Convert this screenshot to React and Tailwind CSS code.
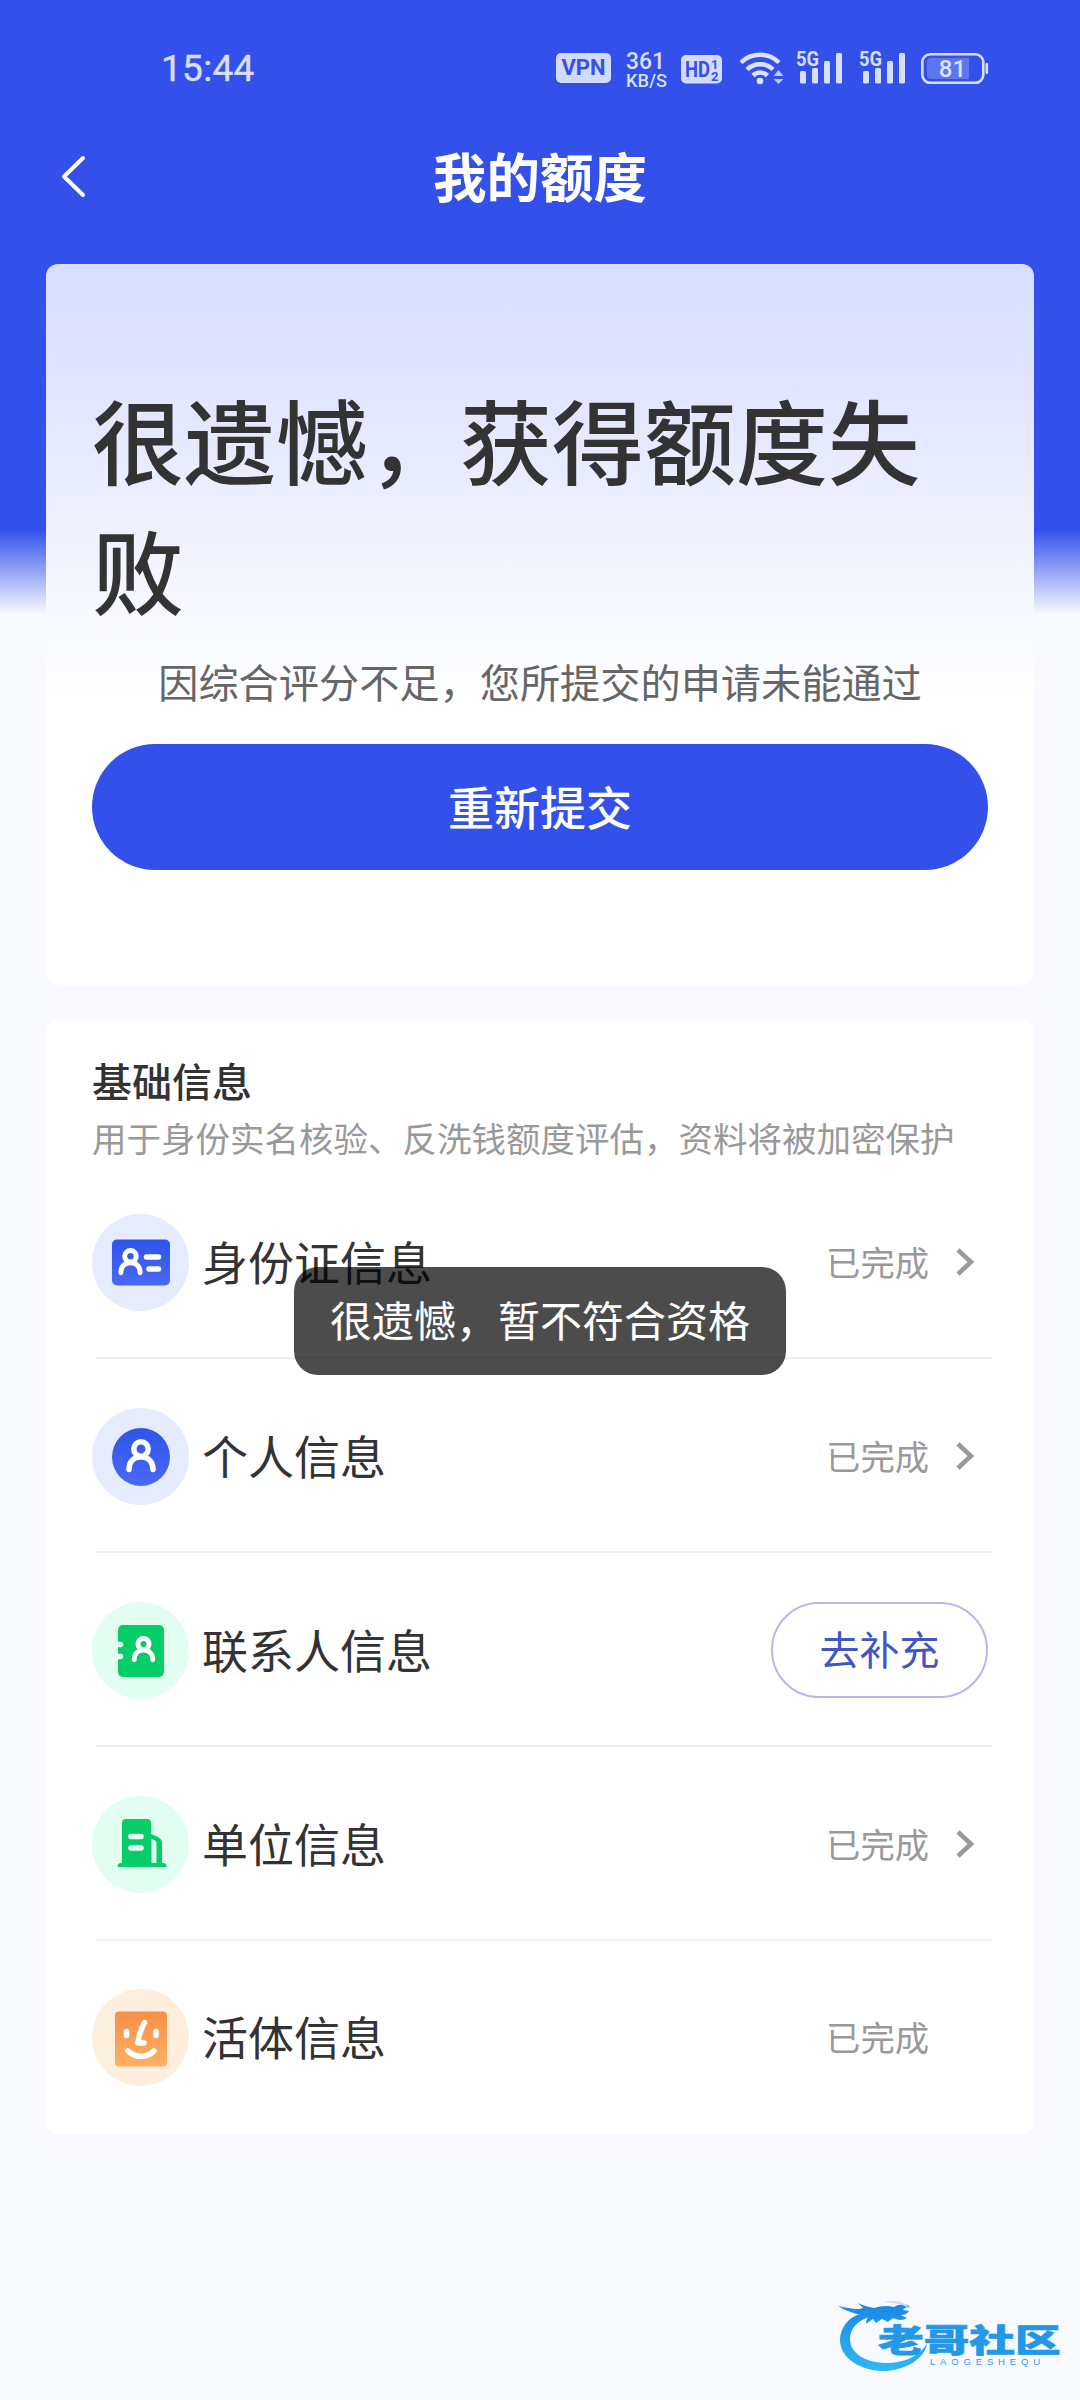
import React from "react";

function StatusBar() {
  return (
    <div className="flex h-[136px] items-start pl-[161px] pr-[91px] font-['Roboto',sans-serif] text-[#d7dffc]">
      <div className="mt-[47px] text-[37px] leading-[44px] tracking-[0.3px] [-webkit-text-stroke:0.4px_#d7dffc]">15:44</div>
      <div className="ml-auto mt-[50px] flex h-[38px] items-start">
        <div className="mt-[3px] flex h-[30px] w-[55px] items-center justify-center rounded-[5px] bg-[#d2dbfb] text-[22px] font-bold leading-none text-[#3351ea]">
          VPN
        </div>
        <svg className="ml-[14px]" width="42" height="38" viewBox="0 0 42 38" fill="#d7dffc" fontFamily="Roboto, sans-serif" fontWeight="500">
          <text x="1" y="19" fontSize="24" textLength="39" lengthAdjust="spacingAndGlyphs">361</text>
          <text x="1" y="36.500" fontSize="19" textLength="41" lengthAdjust="spacingAndGlyphs">KB/S</text>
        </svg>
        <svg className="ml-[14px] mt-[5px]" width="41" height="29" viewBox="0 0 41 29">
          <rect width="41" height="28.500" rx="5" fill="#d2dbfb" />
          <g fill="#3351ea" fontFamily="Roboto, sans-serif" fontWeight="700">
            <text x="4" y="22" fontSize="22" textLength="25" lengthAdjust="spacingAndGlyphs">HD</text>
            <text x="30" y="13.500" fontSize="13">1</text>
            <text x="30" y="25.500" fontSize="13">2</text>
          </g>
        </svg>
        <svg className="ml-[17px]" width="46" height="36" viewBox="0 0 46 36" fill="none">
          <g stroke="#dbe3fd" strokeWidth="4.500">
            <path d="M2 12.500a27 27 0 0 1 38 0" />
            <path d="M8 19.500a18.500 18.500 0 0 1 26 0" />
            <path d="M14 25.500a10.500 10.500 0 0 1 14.500 0" />
          </g>
          <circle cx="21" cy="31" r="3.300" fill="#dbe3fd" />
          <path d="M39.500 20l5 6h-10zM39.500 34l5-5h-10z" fill="#b9c7fa" />
        </svg>
        {[0, 1].map((n) => (
          <svg key={n} className={n ? "ml-[15px] overflow-visible" : "ml-[11px] overflow-visible"} width="48" height="36" viewBox="0 0 48 36" fill="#d7dffc">
            <text x="0" y="16" fontSize="20" fontFamily="Roboto, sans-serif" fontWeight="700" textLength="23" lengthAdjust="spacingAndGlyphs">5G</text>
            <rect x="4" y="21" width="6" height="12.500" rx="1.500" />
            <rect x="16" y="18" width="6" height="15.500" rx="1.500" />
            <rect x="28" y="11" width="6" height="22.500" rx="1.500" />
            <rect x="40" y="3" width="6" height="30.500" rx="1.500" />
          </svg>
        ))}
        <svg className="ml-[14px]" width="68" height="36" viewBox="0 0 68 36">
          <rect x="1.300" y="4.300" width="61" height="28.500" rx="8" fill="none" stroke="#d7dffc" strokeWidth="2.600" />
          <path d="M10 8h38v21H10q-4 0-4-4V12q0-4 4-4z" fill="#5b76ef" />
          <rect x="64.500" y="13" width="2.600" height="11" rx="1.200" fill="#d7dffc" />
          <text x="31.500" y="27" textAnchor="middle" fontSize="24" fontFamily="Roboto, sans-serif" fontWeight="500" fill="#dbe3fd">81</text>
        </svg>
      </div>
    </div>
  );
}

function Person({ x, y, s = 1, w = 5.5 }) {
  return (
    <g transform={`translate(${x} ${y}) scale(${s})`} fill="none" stroke="#fff" strokeWidth={w} strokeLinecap="round">
      <circle cx="0" cy="-6.500" r="7.200" />
      <path d="M-12 14c0-8 5-12.500 12-12.500s12 4.500 12 12.500" />
    </g>
  );
}

const icons = {
  id: (
    <>
      <circle cx="48.500" cy="48.500" r="48.500" fill="#e7ebfe" />
      <rect x="20" y="25.500" width="58" height="46" rx="5" fill="url(#blue)" />
      <Person x={38.500} y={47.500} s={0.8} w={6.200} />
      <path d="M54.500 43h12M57 55h9.500" stroke="#fff" strokeWidth="5.500" strokeLinecap="round" />
    </>
  ),
  person: (
    <>
      <circle cx="48.500" cy="48.500" r="48.500" fill="#e7ebfe" />
      <circle cx="49" cy="49" r="29" fill="url(#blue)" />
      <Person x={49} y={47.500} />
    </>
  ),
  contact: (
    <>
      <circle cx="48.500" cy="48.500" r="48.500" fill="#e1fef0" />
      <rect x="26" y="23" width="46" height="52" rx="5" fill="#07cd68" />
      <path d="M23 42.500h5.500M23 54.500h5.500" stroke="#e8fff4" strokeWidth="5.500" strokeLinecap="round" />
      <Person x={51.500} y={47} s={0.77} w={6.400} />
    </>
  ),
  office: (
    <>
      <circle cx="48.500" cy="48.500" r="48.500" fill="#e1fef0" />
      <path d="M30 67V27q0-4 4-4h21q4 0 4 4v11l7 3q4 2 4 6v20h1.500q3 0 3 4H25.500q0-4 3-4zM59.500 43v24h5V47q0-2-2-2.700z" fill="#07cd68" fillRule="evenodd" />
      <path d="M39 40.500h10M39 52h10" stroke="#e8fff4" strokeWidth="5.500" strokeLinecap="round" />
    </>
  ),
  face: (
    <>
      <circle cx="48.500" cy="48.500" r="48.500" fill="#feeedd" />
      <rect x="23" y="22.500" width="52" height="55" rx="4" fill="url(#orange)" />
      <g fill="none" stroke="#fff" strokeLinecap="round" strokeLinejoin="round" strokeWidth="5.500">
        <path d="M34.500 42.500v4M64 42.500v4" />
        <path d="M52.500 33.500q-6 12-6.500 20.500h6" />
        <path d="M36 62c7 7 19 7 26 0" />
      </g>
    </>
  ),
};

const rows = [
  { icon: "id", label: "身份证信息", arrow: true },
  { icon: "person", label: "个人信息", arrow: true },
  { icon: "contact", label: "联系人信息", action: "去补充" },
  { icon: "office", label: "单位信息", arrow: true },
  { icon: "face", label: "活体信息" },
];

function Row({ icon, label, arrow, action, last }) {
  return (
    <div className={last ? "flex h-[193px] items-center" : "flex h-[194px] items-center bg-[linear-gradient(#f0f0f2,#f0f0f2)] bg-[length:896px_2px] bg-[position:4px_192px] bg-no-repeat"}>
      <svg width="97" height="97" viewBox="0 0 97 97" className="shrink-0">{icons[icon]}</svg>
      <span className="ml-[13px] pb-[5px] text-[46px] leading-[60px] text-[#333]">{label}</span>
      {action ? (
        <button className="ml-auto mr-[4px] flex h-[96px] w-[217px] items-center justify-center rounded-full border-2 border-[#b9b7e6] pb-[4px] text-[40px] text-[#3f56c4]">
          {action}
        </button>
      ) : (
        <div className="ml-auto flex items-center pr-[17px]">
          <span className="pb-[3px] text-[34.300px] leading-[44px] text-[#999]">已完成</span>
          <svg width="20" height="32" viewBox="0 0 20 32" className={arrow ? "ml-[26px]" : "invisible ml-[26px]"}>
            <path d="M3 4l13 12L3 28" fill="none" stroke="#999" strokeWidth="4.500" />
          </svg>
        </div>
      )}
    </div>
  );
}

function Watermark() {
  return (
    <svg className="absolute left-[834px] top-[2294px]" width="234" height="80" viewBox="0 0 234 80">
      <defs>
        <linearGradient id="wm" x1="0" y1="8" x2="0" y2="78" gradientUnits="userSpaceOnUse">
          <stop offset="0" stopColor="#1a86e2" />
          <stop offset="1" stopColor="#2fb9f8" />
        </linearGradient>
        <linearGradient id="wmText" x1="0" y1="31" x2="0" y2="61" gradientUnits="userSpaceOnUse">
          <stop offset="0" stopColor="#1a78d8" />
          <stop offset="1" stopColor="#2fb4f6" />
        </linearGradient>
      </defs>
      <path d="M34 18C16 20 6 33 6 47c1 18 22 31 47 30 20-2 37-12 40-27-9 13-24 19-40 19-22 0-37-10-37-24 0-10 7-18 19-22z" fill="url(#wm)" />
      <path d="M4 12c6 1 13 3 21 3l4-1-5-5c6 3 11 4 16 5 6-2 13-3 20-1 5-3 12-4 16 0-4 0-6 1-7 3l6 1c-2 3-5 4-8 4l6 3c-5 3-10 2-14 0l-5 4-6-3-6 4-3-4-7 5c0-3 1-5 2-7l-6 2 1-4c-8-1-17-4-25-9z" fill="url(#wm)" />
      <path d="M50 8c9-2 21-2 25 6-7-4-15-5-25-6z" fill="#c9dffb" />
      <g transform="translate(44 58) scale(1.450 1)">
        <text fontFamily="'Noto Sans CJK SC', sans-serif" fontWeight="900" fontSize="31.500" fill="#2398e8" stroke="#2398e8" strokeWidth="0.700">老哥社区</text>
      </g>
      <text x="96" y="70.500" fontFamily="'Liberation Sans', sans-serif" fontSize="9.500" fill="#2b9be8" textLength="110">LAOGESHEQU</text>
    </svg>
  );
}

export default function App() {
  return (
    <div className="relative h-[2400px] w-[1080px] overflow-hidden bg-[#f9faff] bg-[linear-gradient(to_bottom,#3351ea_0px,#3351ea_530px,#f9faff_614px)] font-['Noto_Sans_CJK_SC',sans-serif]">
      <svg width="0" height="0" className="absolute">
        <defs>
          <linearGradient id="blue" x1="0" y1="0" x2="0" y2="1">
            <stop offset="0" stopColor="#2e55e8" />
            <stop offset="1" stopColor="#4a68f6" />
          </linearGradient>
          <linearGradient id="orange" x1="0" y1="0" x2="0" y2="1">
            <stop offset="0" stopColor="#f78f48" />
            <stop offset="1" stopColor="#feb063" />
          </linearGradient>
        </defs>
      </svg>

      <StatusBar />

      <header className="grid h-[128px] grid-cols-[120px_1fr_120px] items-start">
        <svg width="30" height="58" viewBox="0 0 30 58" className="ml-[59px] mt-[11px]">
          <path d="M24 11L5 29.500 24 48" fill="none" stroke="#fff" strokeWidth="4" strokeLinecap="round" strokeLinejoin="round" />
        </svg>
        <h1 className="text-center text-[53.500px] font-bold leading-[78px] text-white">我的额度</h1>
      </header>

      <main className="px-[46px]">
        <section className="h-[721px] rounded-[12px] bg-[linear-gradient(to_bottom,#d8deff_0px,#e0e4ff_110px,#f7f9ff_350px,#ffffff_440px)] px-[46px] pt-[109px]">
          <h2 className="text-[92px] font-medium leading-[130px] text-[#333]">很遗憾，获得额度失败</h2>
          <p className="mt-[20px] text-center text-[40.200px] leading-[56px] text-[#666]">因综合评分不足，您所提交的申请未能通过</p>
          <button className="mt-[35px] flex h-[126px] w-full items-center justify-center rounded-full bg-[#3351ea] pb-[4px] text-[46px] font-medium text-white">
            重新提交
          </button>
        </section>

        <section className="mt-[35px] h-[1114px] rounded-[12px] bg-white pl-[46px] pr-[42px] pt-[33px]">
          <h3 className="text-[40px] font-medium leading-[54px] text-[#333]">基础信息</h3>
          <p className="mb-[2px] mt-[4px] whitespace-nowrap text-[34.500px] leading-[52px] text-[#999]">
            用于身份实名核验、反洗钱额度评估，资料将被加密保护
          </p>
          <div>
            {rows.map((row, i) => (
              <Row key={row.icon} {...row} last={i === rows.length - 1} />
            ))}
          </div>
        </section>
      </main>

      <div className="absolute left-[294px] top-[1267px] flex h-[108px] w-[492px] items-center justify-center rounded-[24px] bg-black/70 pb-[6px] text-[42px] text-white">
        很遗憾，暂不符合资格
      </div>

      <Watermark />
    </div>
  );
}
